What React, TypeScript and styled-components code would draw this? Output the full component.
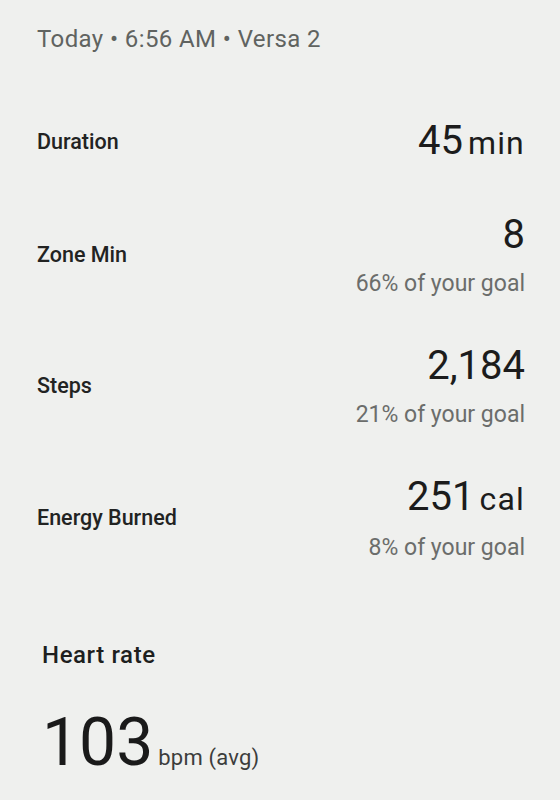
import React from "react";
import styled, { createGlobalStyle } from "styled-components";

const GlobalStyle = createGlobalStyle`
  html, body {
    margin: 0;
    padding: 0;
    background: #eff0ee;
  }
  body {
    font-family: Roboto, "Noto Sans", "Liberation Sans", sans-serif;
    -webkit-font-smoothing: antialiased;
  }
`;

const Page = styled.main`
  min-height: 800px;
  box-sizing: border-box;
  padding: 23px 35px 0 37px;
  background: #eff0ee;
  color: #1e1f1e;
`;

const Header = styled.div`
  font-size: 24px;
  line-height: 32px;
  letter-spacing: 0.4px;
  color: #606360;
`;

const Stats = styled.section`
  display: flex;
  flex-direction: column;
  gap: 48px;
  margin-top: 64px;
`;

const Row = styled.div`
  display: flex;
  justify-content: space-between;
  align-items: center;
`;

const Label = styled.div`
  font-size: 21.5px;
  line-height: 28px;
  font-weight: 500;
  color: #222322;
`;

const ValueBlock = styled.div`
  display: flex;
  flex-direction: column;
  align-items: flex-end;
`;

const ValueLine = styled.div`
  display: flex;
  align-items: baseline;
  line-height: 44px;
`;

const Number = styled.span`
  font-size: 40px;
  font-weight: 400;
  color: #1c1c1c;
`;

const Unit = styled.span`
  font-size: 32px;
  margin-left: 5px;
  color: #1c1c1c;
  letter-spacing: 1.2px;
`;

const Goal = styled.div`
  margin-top: 15px;
  font-size: 23px;
  line-height: 24px;
  color: #6b6d6b;
`;

const HeartSection = styled.section`
  margin-top: 80px;
  padding-left: 5px;
`;

const SectionTitle = styled.h2`
  margin: 0;
  font-size: 24px;
  line-height: 30px;
  font-weight: 500;
  letter-spacing: 0.6px;
  color: #1e1f1e;
`;

const BigValue = styled.div`
  display: flex;
  align-items: baseline;
  margin-top: 37px;
  line-height: 72px;
`;

const BigNumber = styled.span`
  font-size: 66px;
  color: #1a1a1a;
`;

const BigUnit = styled.span`
  font-size: 22px;
  margin-left: 5px;
  letter-spacing: 0.2px;
  color: #3c3d3c;
`;

type Stat = { label: string; value: string; unit?: string; goal?: string };

const stats: Stat[] = [
  { label: "Duration", value: "45", unit: "min" },
  { label: "Zone Min", value: "8", goal: "66% of your goal" },
  { label: "Steps", value: "2,184", goal: "21% of your goal" },
  { label: "Energy Burned", value: "251", unit: "cal", goal: "8% of your goal" },
];

export default function App() {
  return (
    <>
      <GlobalStyle />
      <Page>
        <Header>Today • 6:56 AM • Versa 2</Header>
        <Stats>
          {stats.map((s) => (
            <Row key={s.label}>
              <Label>{s.label}</Label>
              <ValueBlock>
                <ValueLine>
                  <Number>{s.value}</Number>
                  {s.unit && <Unit>{s.unit}</Unit>}
                </ValueLine>
                {s.goal && <Goal>{s.goal}</Goal>}
              </ValueBlock>
            </Row>
          ))}
        </Stats>
        <HeartSection>
          <SectionTitle>Heart rate</SectionTitle>
          <BigValue>
            <BigNumber>103</BigNumber>
            <BigUnit>bpm (avg)</BigUnit>
          </BigValue>
        </HeartSection>
      </Page>
    </>
  );
}
